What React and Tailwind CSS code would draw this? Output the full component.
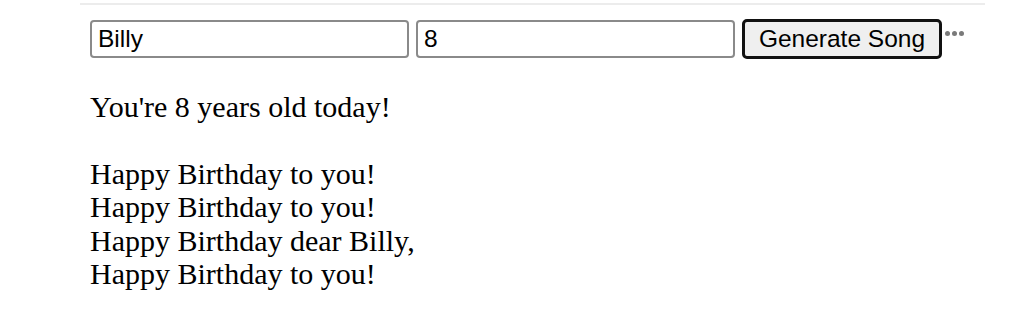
export default function App() {
  return (
    <div className="w-[1036px] h-[334px] bg-white">
      <div className="ml-[80px] w-[905px] pt-[3px]">
        <div className="h-[2px] bg-[#ececec]" />
        <div className="ml-[10px] mt-[15px] flex items-start">
          <input
            defaultValue="Billy"
            className="w-[319px] h-[38px] border-[2px] border-[#8a8a8a] rounded-[4px] px-[6px] text-[24.5px] text-black outline-none"
            style={{ fontFamily: '"Liberation Sans", Arial, sans-serif' }}
          />
          <input
            defaultValue="8"
            className="ml-[7px] w-[319px] h-[38px] border-[2px] border-[#8a8a8a] rounded-[4px] px-[6px] text-[24.5px] text-black outline-none"
            style={{ fontFamily: '"Liberation Sans", Arial, sans-serif' }}
          />
          <button
            className="ml-[7px] w-[200px] h-[40px] -mt-[1px] border-[3px] border-[#111] rounded-[5px] bg-[#efefef] text-[24.5px] text-black leading-none"
            style={{ fontFamily: '"Liberation Sans", Arial, sans-serif' }}
          >
            Generate Song
          </button>
          <div className="ml-[3px] mt-[11px] flex gap-[2px]">
            <span className="w-[5px] h-[5px] rounded-full bg-[#7a7a7a]" />
            <span className="w-[5px] h-[5px] rounded-full bg-[#7a7a7a]" />
            <span className="w-[5px] h-[5px] rounded-full bg-[#7a7a7a]" />
          </div>
        </div>
        <div
          className="ml-[10px] mt-[31px] text-[30px] leading-[33.4px] text-black"
          style={{ fontFamily: '"Liberation Serif", "Times New Roman", serif' }}
        >
          You're 8 years old today!
          <br />
          <br />
          Happy Birthday to you!
          <br />
          Happy Birthday to you!
          <br />
          Happy Birthday dear Billy,
          <br />
          Happy Birthday to you!
        </div>
      </div>
    </div>
  );
}
